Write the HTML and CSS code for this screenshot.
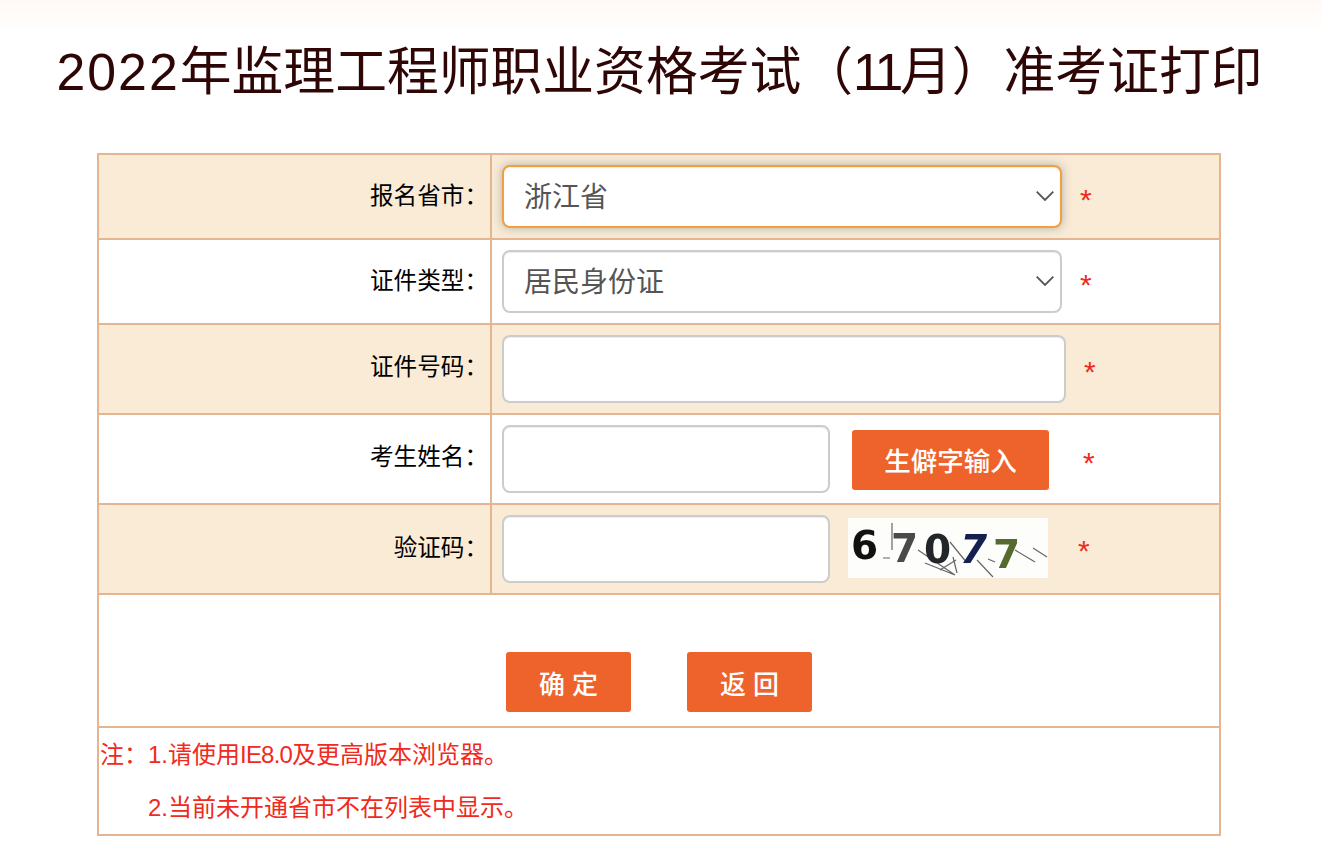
FILE: index.html
```html
<!DOCTYPE html>
<html lang="zh-CN">
<head>
<meta charset="utf-8">
<title>2022年监理工程师职业资格考试（11月）准考证打印</title>
<link rel="stylesheet" href="styles.css">
</head>
<body>
<div class="page">
  <h1 class="title"><span class="num">2022</span>年监理工程师职业资格考试（<span class="num-tight">11</span>月）准考证打印</h1>
  <table class="form-table">
    <tr class="row row-tinted row-85">
      <th class="label">报名省市：</th>
      <td class="field">
        <div class="line">
          <div class="select-wrap select-focus">
            <select class="control select"><option>浙江省</option></select>
            <svg class="chevron" viewBox="0 0 18 10" aria-hidden="true"><path d="M.7.7 9 9 17.300.7" fill="none" stroke="#555" stroke-width="1.800"/></svg>
          </div>
          <span class="star star-select">*</span>
        </div>
      </td>
    </tr>
    <tr class="row row-85">
      <th class="label">证件类型：</th>
      <td class="field">
        <div class="line">
          <div class="select-wrap">
            <select class="control select"><option>居民身份证</option></select>
            <svg class="chevron" viewBox="0 0 18 10" aria-hidden="true"><path d="M.7.7 9 9 17.300.7" fill="none" stroke="#555" stroke-width="1.800"/></svg>
          </div>
          <span class="star star-select">*</span>
        </div>
      </td>
    </tr>
    <tr class="row row-tinted row-90">
      <th class="label label-raised">证件号码：</th>
      <td class="field">
        <div class="line">
          <input class="control input input-wide" type="text">
          <span class="star star-wide">*</span>
        </div>
      </td>
    </tr>
    <tr class="row row-90">
      <th class="label label-raised">考生姓名：</th>
      <td class="field">
        <div class="line">
          <input class="control input input-short" type="text">
          <button class="btn btn-rare" type="button">生僻字输入</button>
          <span class="star star-name">*</span>
        </div>
      </td>
    </tr>
    <tr class="row row-tinted row-90">
      <th class="label">验证码：</th>
      <td class="field">
        <div class="line">
          <input class="control input input-short" type="text">
          <svg class="captcha" viewBox="0 0 200 60" role="img" aria-label="验证码图片">
            <rect width="200" height="60" fill="#fdfdfb"/>
            <g class="captcha-noise">
              <path d="M44 5V32M35 40H42"/>
              <path d="M70 32 107 57M77 45 107 57M102 24 119 45M105 39 109 55M129 42 145 59M140 41 147 44M167 32 187 44M185 30 199 39M108 42 92 52"/>
            </g>
            <text class="captcha-digit" x="3" y="41" fill="#111">6</text>
            <text class="captcha-digit" x="43" y="44" fill="#4a4a4a">7</text>
            <text class="captcha-digit" x="76" y="45" fill="#22262a">0</text>
            <text class="captcha-digit captcha-slant" x="112" y="45" fill="#14204f">7</text>
            <text class="captcha-digit" x="145" y="50" fill="#56692f">7</text>
          </svg>
          <span class="star star-code">*</span>
        </div>
      </td>
    </tr>
    <tr class="row row-actions">
      <td class="actions" colspan="2">
        <div class="action-bar">
          <button class="btn btn-action" type="button">确 定</button>
          <button class="btn btn-action" type="button">返 回</button>
        </div>
      </td>
    </tr>
    <tr class="row">
      <td class="notes" colspan="2">
        <p class="note">注：1.请使用<span class="note-latin">IE8.0</span>及更高版本浏览器。</p>
        <p class="note note-indent">2.当前未开通省市不在列表中显示。</p>
      </td>
    </tr>
  </table>
</div>
</body>
</html>
```

FILE: styles.css
```css
* { box-sizing: border-box; }
html, body { margin: 0; padding: 0; }
body {
  background: linear-gradient(#fff9f5 0, #ffffff 32px) no-repeat;
  font-family: "Liberation Sans", "Noto Sans CJK SC", sans-serif;
  color: #000;
}
.page { width: 1322px; height: 854px; overflow: hidden; padding-top: 40px; }
.title {
  height: 64px;
  margin: 0 0 49px;
  padding-right: 3px;
  line-height: 64px;
  font-size: 51.800px;
  font-weight: 400;
  color: #2f0606;
  text-align: center;
  white-space: nowrap;
}
.num { letter-spacing: 2px; }
.num-tight { letter-spacing: -3.500px; }
.form-table {
  width: 1124px;
  margin-left: 97px;
  border-collapse: collapse;
  table-layout: fixed;
  border: 2px solid #e5b491;
}
.row-tinted { background: #f9ebd6; }
.row-85 { height: 85px; }
.row-90 { height: 90px; }
.row-actions { height: 133px; }
.row > th, .row > td { border: 2px solid #e5b491; padding: 0; }
.row > .label {
  width: 393px;
  padding: 0 2px 6px 0;
  text-align: right;
  font-size: 23.600px;
  font-weight: 400;
  white-space: nowrap;
}
.row > .label-raised { padding-bottom: 8px; }
.row > .field { padding-left: 10px; }
.line { display: flex; align-items: center; }
.control {
  display: block;
  background: #fff;
  border: 2px solid #ccc;
  border-radius: 8px;
  font-family: inherit;
  color: #555;
  box-shadow: inset 0 1px 1px rgba(0, 0, 0, .075);
  outline: none;
}
.select-wrap { position: relative; width: 560px; height: 63px; }
.select {
  width: 100%;
  height: 100%;
  padding: 2px 40px 0 20px;
  font-size: 28px;
  appearance: none;
  -webkit-appearance: none;
}
.select-focus .select {
  border-color: #f59e3d;
  box-shadow: inset 0 1px 1px rgba(0, 0, 0, .075), 0 0 10px rgba(102, 120, 130, .5);
}
.chevron { position: absolute; right: 8px; top: 26px; width: 18px; height: 10px; }
.input { height: 68px; }
.input-wide { width: 564px; }
.input-short { width: 328px; }
.star { color: #f02a20; font-size: 30px; line-height: 1; padding-top: 6px; }
.star-select { margin-left: 18px; }
.star-wide { margin-left: 18px; }
.star-name { margin-left: 34px; padding-top: 8px; }
.star-code { margin-left: 30px; padding-top: 4px; }
.btn {
  display: block;
  padding: 0;
  background: #ee632c;
  color: #fff;
  border: 0;
  border-radius: 3px;
  font-family: inherit;
}
.btn-rare { width: 197px; height: 60px; margin: 1px 0 0 22px; font-size: 26.500px; font-weight: 500; }
.captcha { display: block; width: 200px; height: 60px; margin: 0 0 2px 18px; }
.captcha-noise { fill: none; stroke: #666; stroke-width: 1.200; }
.captcha-digit { font: 700 39px "DejaVu Sans", sans-serif; filter: blur(.4px); }
.captcha-slant { font-style: italic; }
.action-bar { display: flex; gap: 56px; padding: 57px 0 0 407px; align-items: flex-start; height: 131px; }
.actions { vertical-align: top; }
.btn-action { width: 125px; height: 60px; font-size: 26px; font-weight: 500; }
.note { margin: 0; height: 53px; line-height: 53px; padding-left: 1px; color: #f02a20; font-size: 24px; }
.note-latin { letter-spacing: -.8px; }
.note-indent { padding-left: 49px; }
```
